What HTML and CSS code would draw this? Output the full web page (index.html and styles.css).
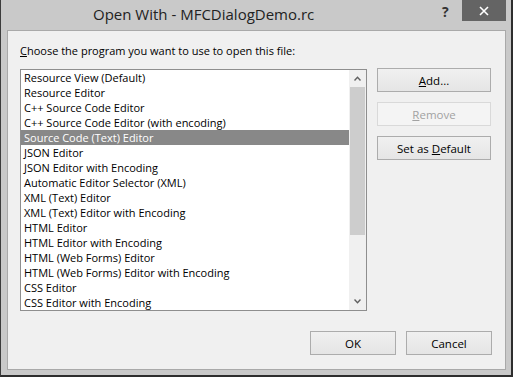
FILE: index.html
```html
<!DOCTYPE html>
<html lang="en">
<head>
    <meta charset="UTF-8">
    <title>Open With - MFCDialogDemo.rc</title>
    <link rel="stylesheet" href="styles.css">
</head>
<body>
    <div class="window">
        <div class="titlebar">
            <div class="title">Open With - MFCDialogDemo.rc</div>
            <div class="help">?</div>
            <div class="close">
                <svg width="10" height="10" viewBox="0 0 10 10">
                    <path d="M1 1 L9 9 M9 1 L1 9" stroke="#fff" stroke-width="1.6"/>
                </svg>
            </div>
        </div>

        <div class="client">
            <div class="prompt"><u>C</u>hoose the program you want to use to open this file:</div>

            <div class="main">
                <div class="listbox">
                    <ul class="items">
                        <li>Resource View (Default)</li>
                        <li>Resource Editor</li>
                        <li>C++ Source Code Editor</li>
                        <li>C++ Source Code Editor (with encoding)</li>
                        <li class="selected">Source Code (Text) Editor</li>
                        <li>JSON Editor</li>
                        <li>JSON Editor with Encoding</li>
                        <li>Automatic Editor Selector (XML)</li>
                        <li>XML (Text) Editor</li>
                        <li>XML (Text) Editor with Encoding</li>
                        <li>HTML Editor</li>
                        <li>HTML Editor with Encoding</li>
                        <li>HTML (Web Forms) Editor</li>
                        <li>HTML (Web Forms) Editor with Encoding</li>
                        <li>CSS Editor</li>
                        <li>CSS Editor with Encoding</li>
                    </ul>
                    <div class="scrollbar">
                        <div class="arrow">
                            <svg width="7" height="5" viewBox="0 0 7 5"><path d="M0.5 4.5 L3.5 1.2 L6.5 4.5" fill="none" stroke="#606060" stroke-width="1.4"/></svg>
                        </div>
                        <div class="track">
                            <div class="thumb"></div>
                        </div>
                        <div class="arrow">
                            <svg width="7" height="5" viewBox="0 0 7 5"><path d="M0.5 0.5 L3.5 3.8 L6.5 0.5" fill="none" stroke="#606060" stroke-width="1.4"/></svg>
                        </div>
                    </div>
                </div>

                <div class="side-buttons">
                    <button class="btn"><u>A</u>dd...</button>
                    <button class="btn disabled"><u>R</u>emove</button>
                    <button class="btn">Set as <u>D</u>efault</button>
                </div>
            </div>

            <div class="footer">
                <button class="btn small">OK</button>
                <button class="btn small">Cancel</button>
            </div>
        </div>
    </div>
</body>
</html>
```

FILE: styles.css
```css
* {
    box-sizing: border-box;
    margin: 0;
    padding: 0;
}
body {
    width: 513px;
    height: 377px;
    overflow: hidden;
    font-family: 'Open Sans', 'Noto Sans', sans-serif;
    font-size: 11px;
    color: #000;
    background: #c9c9c9;
}
.window {
    width: 513px;
    height: 377px;
    background: #c9c9c9;
    border-left: 1px solid #3c3c3c;
    border-right: 2px solid #2e2e2e;
    border-bottom: 2px solid #2e2e2e;
    display: flex;
    flex-direction: column;
}
.titlebar {
    height: 30px;
    display: flex;
    align-items: flex-start;
}
.title {
    font-size: 15px;
    color: #222;
    padding-left: 92px;
    padding-top: 4px;
    flex: 1;
}
.help {
    font-size: 14px;
    font-weight: bold;
    color: #333;
    width: 16px;
    padding-top: 2px;
    margin-right: 4px;
}
.close {
    width: 44px;
    height: 21px;
    background: #646464;
    display: flex;
    justify-content: center;
    align-items: center;
    margin-right: 5px;
}
.client {
    flex: 1;
    margin: 0 5px 5px 6px;
    background: #f0f0f0;
    border: 1px solid #a9a9a9;
    padding: 12px 13px 0 12px;
    display: flex;
    flex-direction: column;
}
.prompt {
    height: 15px;
    line-height: 15px;
    margin-bottom: 11px;
}
.prompt u, .btn u {
    text-decoration: underline;
    text-underline-offset: 1px;
}
.main {
    display: flex;
    gap: 10px;
}
.listbox {
    width: 347px;
    height: 242px;
    border: 1px solid #8e8e8e;
    background: #fff;
    display: flex;
}
.items {
    list-style: none;
    flex: 1;
}
.items li {
    height: 15px;
    line-height: 15px;
    padding-left: 3px;
    white-space: nowrap;
}
.items li.selected {
    background: #888;
    color: #fff;
}
.scrollbar {
    width: 17px;
    display: flex;
    flex-direction: column;
    background: #f0f0f0;
}
.arrow {
    height: 17px;
    display: flex;
    justify-content: center;
    align-items: center;
}
.track {
    flex: 1;
}
.thumb {
    width: 15px;
    height: 148px;
    margin-left: 1px;
    background: #cdcdcd;
}
.side-buttons {
    width: 114px;
    display: flex;
    flex-direction: column;
    gap: 10px;
    margin-top: -1px;
}
.btn {
    height: 24px;
    font-family: inherit;
    font-size: 11.5px;
    color: #000;
    border: 1px solid #acacac;
    background: linear-gradient(#f0f0f0, #e5e5e5);
}
.btn.disabled {
    color: #a2a2a2;
    border-color: #d9d9d9;
    background: #f4f4f4;
}
.footer {
    display: flex;
    justify-content: flex-end;
    gap: 10px;
    margin-top: 20px;
}
.btn.small {
    width: 86px;
}
```
